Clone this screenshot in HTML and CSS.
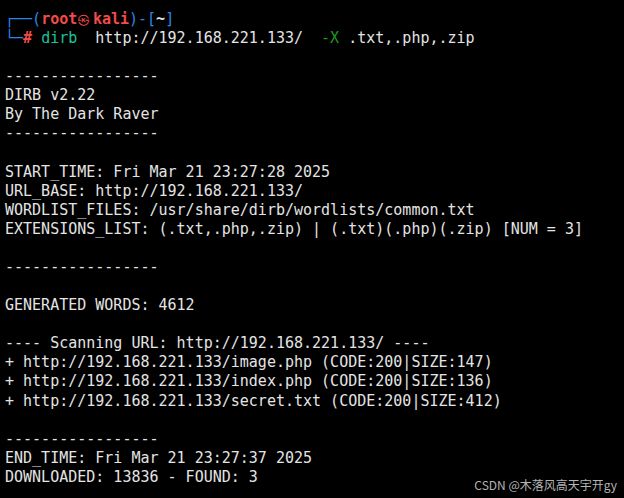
FILE: index.html
```html
<!DOCTYPE html>
<html>
<head>
<meta charset="utf-8">
<link rel="stylesheet" href="styles.css">
</head>
<body>
<pre class="term"><span class="tree">┌──</span><span class="blue">(</span><span class="red b">root<span class="wide">㉿</span>kali</span><span class="blue">)-[</span><span class="b">~</span><span class="blue">]</span>
<span class="tree">└─</span><span class="red b">#</span> <span class="cmd">dirb</span>  http://192.168.221.133/  <span class="opt">-X</span> .txt,.php,.zip

-----------------
DIRB v2.22
By The Dark Raver
-----------------

START_TIME: Fri Mar 21 23:27:28 2025
URL_BASE: http://192.168.221.133/
WORDLIST_FILES: /usr/share/dirb/wordlists/common.txt
EXTENSIONS_LIST: (.txt,.php,.zip) | (.txt)(.php)(.zip) [NUM = 3]

-----------------

GENERATED WORDS: 4612

---- Scanning URL: http://192.168.221.133/ ----
+ http://192.168.221.133/image.php (CODE:200|SIZE:147)
+ http://192.168.221.133/index.php (CODE:200|SIZE:136)
+ http://192.168.221.133/secret.txt (CODE:200|SIZE:412)

-----------------
END_TIME: Fri Mar 21 23:27:37 2025
DOWNLOADED: 13836 - FOUND: 3</pre>
<div class="mark">CSDN @木落风高天宇开gy</div>
</body>
</html>
```
FILE: styles.css
```css
html, body {
  margin: 0;
  padding: 0;
  background: #000;
  width: 624px;
  height: 498px;
  overflow: hidden;
}
body {
  position: relative;
}
.term {
  margin: 0;
  padding: 10px 0 0 5px;
  font-family: "DejaVu Sans Mono", "Liberation Mono", monospace;
  font-size: 15px;
  line-height: 19.08px;
  color: #e4e4e4;
}
.tree { color: #2f84e8; }
.blue { color: #2f84e8; }
.red { color: #f24b4b; }
.b { font-weight: bold; }
.wide {
  display: inline-block;
  width: 2ch;
  text-align: left;
  font-weight: normal;
  font-size: 13px;
}
.cmd { color: #1cc49c; }
.opt { color: #1f9a1f; }
.mark {
  position: absolute;
  right: 7px;
  bottom: 5px;
  font-family: "Noto Sans CJK SC", sans-serif;
  font-size: 12px;
  color: #b4b4b4;
}
```
